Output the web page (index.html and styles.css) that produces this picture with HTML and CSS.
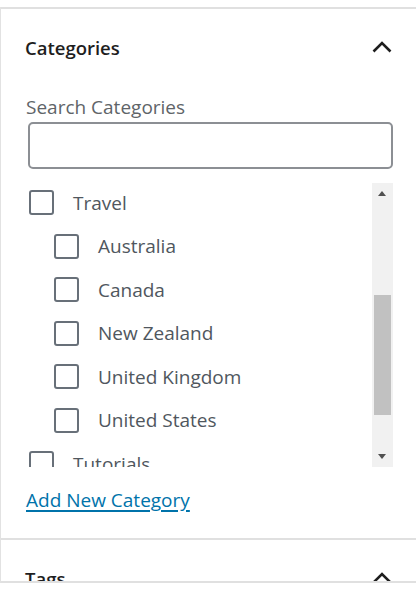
FILE: index.html
```html
<!DOCTYPE html>
<html lang="en">
<head>
<meta charset="utf-8">
<title>Categories</title>
<link rel="stylesheet" href="styles.css">
</head>
<body>
<div class="top-gap"></div>
<div class="sidebar">
  <section class="panel">
    <div class="panel-header">
      <h2 class="panel-title">Categories</h2>
      <svg class="chevron" width="20" height="12" viewBox="0 0 20 12"><path d="M1.5 10.5 L10 2 L18.5 10.5" fill="none" stroke="#1e1e1e" stroke-width="2.6"/></svg>
    </div>
    <div class="panel-body">
      <label class="search-label" for="s">Search Categories</label>
      <input id="s" class="search-input" type="text">
      <div class="list-wrap">
        <div class="list-viewport">
          <div class="row"><span class="box"></span><span class="text">Travel</span></div>
          <div class="row child"><span class="box"></span><span class="text">Australia</span></div>
          <div class="row child"><span class="box"></span><span class="text">Canada</span></div>
          <div class="row child"><span class="box"></span><span class="text">New Zealand</span></div>
          <div class="row child"><span class="box"></span><span class="text">United Kingdom</span></div>
          <div class="row child"><span class="box"></span><span class="text">United States</span></div>
          <div class="row"><span class="box"></span><span class="text">Tutorials</span></div>
        </div>
        <div class="scrollbar">
          <div class="arrow up"></div>
          <div class="track"><div class="thumb"></div></div>
          <div class="arrow down"></div>
        </div>
      </div>
      <a class="add-link" href="#">Add New Category</a>
    </div>
  </section>
  <section class="panel next">
    <div class="panel-header">
      <h2 class="panel-title">Tags</h2>
      <svg class="chevron" width="20" height="12" viewBox="0 0 20 12"><path d="M1.5 10.5 L10 2 L18.5 10.5" fill="none" stroke="#1e1e1e" stroke-width="2.6"/></svg>
    </div>
  </section>
</div>
</body>
</html>
```
FILE: styles.css
```css
html, body {
  margin: 0;
  padding: 0;
  background: #fff;
}
body {
  font-family: "Open Sans", "Noto Sans", sans-serif;
  color: #1e1e1e;
}
.top-gap {
  height: 7px;
}
.sidebar {
  height: 576px;
  overflow: hidden;
  border-left: 1px solid #e2e2e2;
  border-bottom: 2px solid #e0e0e0;
  box-sizing: border-box;
}
.panel {
  border-top: 2px solid #e0e0e0;
}
.panel-header {
  display: flex;
  align-items: center;
  justify-content: space-between;
  height: 76px;
  padding: 0 24px 0 24px;
  box-sizing: border-box;
}
.panel-title {
  margin: 0;
  font-size: 18.5px;
  font-weight: 600;
  color: #1e1e1e;
}
.chevron {
  display: block;
}
.panel-body {
  padding: 0 23px 0 25px;
}
.search-label {
  display: block;
  margin-top: 10px;
  font-size: 19px;
  color: #606468;
  line-height: 24px;
}
.search-input {
  display: block;
  box-sizing: border-box;
  width: calc(100% - 2px);
  margin-left: 2px;
  height: 47px;
  margin-top: 3px;
  border: 2px solid #8c8f94;
  border-radius: 5px;
  background: #fff;
}
.list-wrap {
  display: flex;
  margin-top: 14px;
  height: 284px;
}
.list-viewport {
  flex: 1;
  overflow: hidden;
  padding: 7px 0 0 3px;
}
.row {
  display: flex;
  align-items: center;
  gap: 19px;
  height: 25px;
  margin-bottom: 18.5px;
}
.row.child {
  padding-left: 25px;
}
.box {
  width: 25px;
  height: 25px;
  box-sizing: border-box;
  border: 2.5px solid #687079;
  border-radius: 3px;
  flex: none;
}
.text {
  font-size: 19px;
  color: #50575e;
}
.scrollbar {
  width: 21px;
  flex: none;
  background: #f1f1f1;
  display: flex;
  flex-direction: column;
}
.arrow {
  height: 21px;
  flex: none;
  position: relative;
}
.arrow::after {
  content: "";
  position: absolute;
  left: 6px;
  border-left: 4.5px solid transparent;
  border-right: 4.5px solid transparent;
}
.arrow.up::after {
  top: 8px;
  border-bottom: 5px solid #505050;
}
.arrow.down::after {
  top: 8px;
  border-top: 5px solid #505050;
}
.track {
  flex: 1;
  padding-top: 91px;
}
.thumb {
  margin: 0 2px;
  height: 120px;
  background: #c1c1c1;
}
.add-link {
  display: inline-block;
  margin-top: 20px;
  font-size: 19px;
  color: #0073aa;
  text-decoration: underline;
  text-decoration-thickness: 1.5px;
  text-underline-offset: 3px;
  margin-bottom: 25px;
}
```
